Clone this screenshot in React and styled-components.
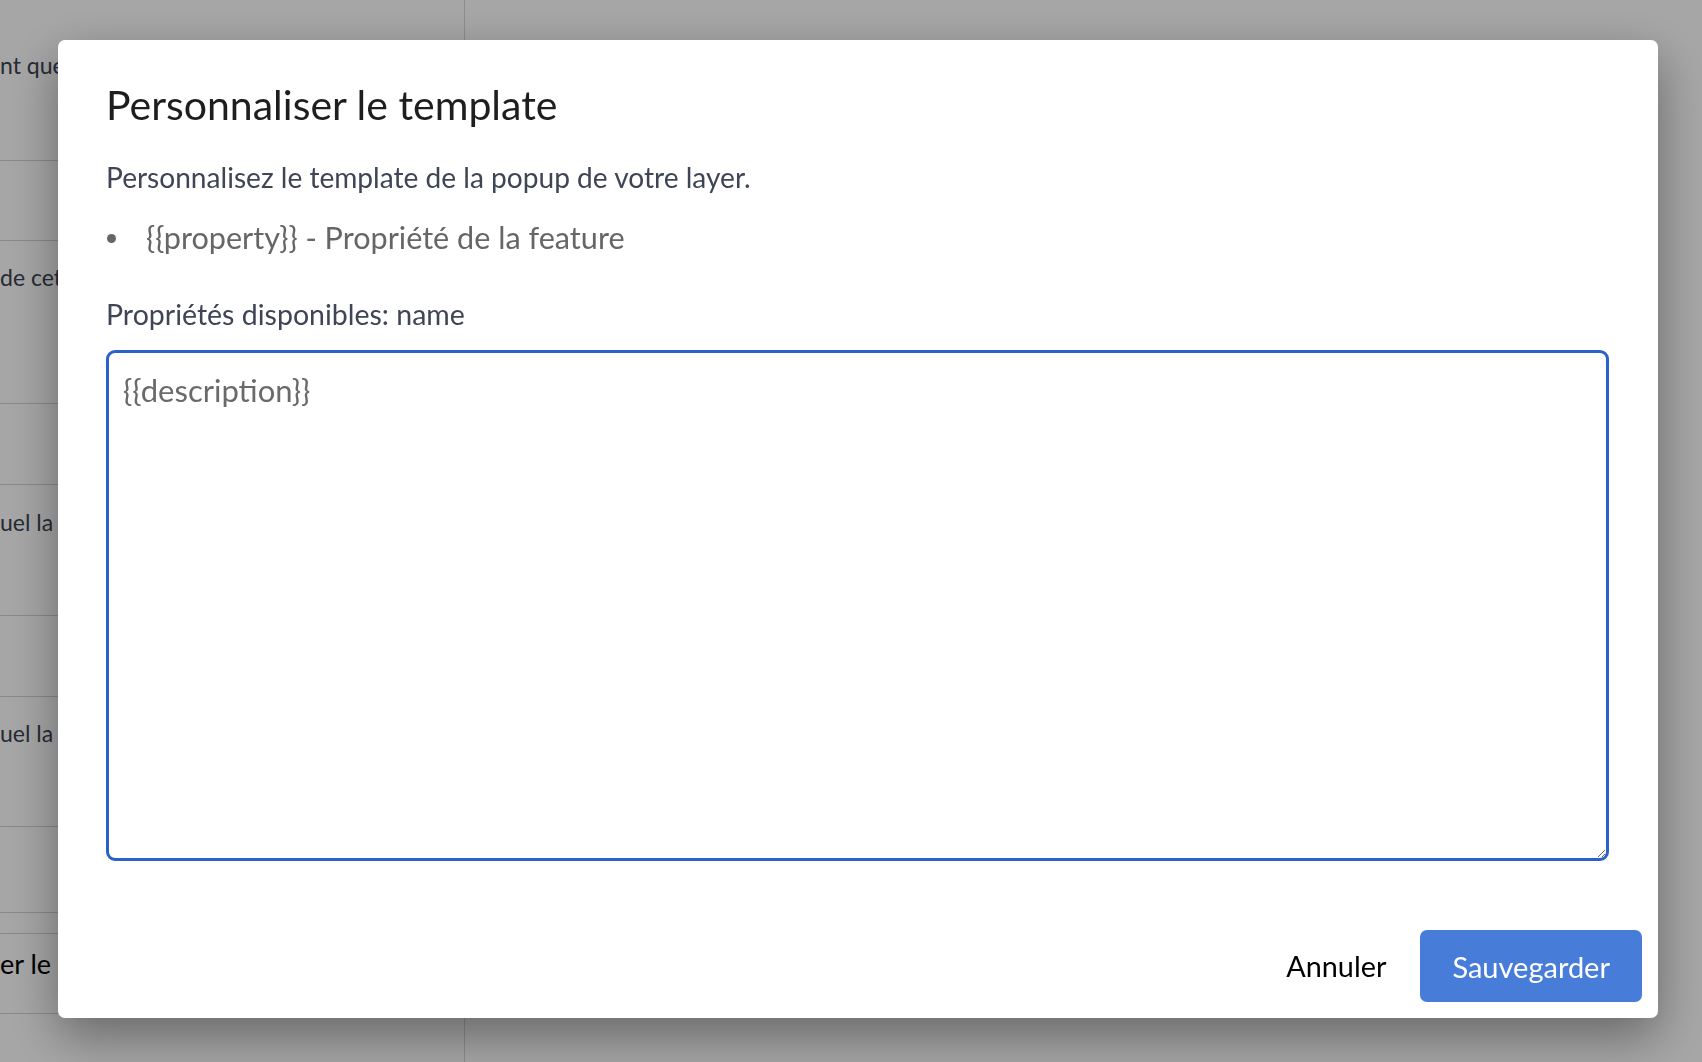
import React from 'react';
import styled, { createGlobalStyle } from 'styled-components';

const GlobalStyle = createGlobalStyle`
  html, body {
    margin: 0;
    padding: 0;
    height: 100%;
    overflow: hidden;
  }
  body {
    font-family: Lato, "Open Sans", "Liberation Sans", sans-serif;
    background: #ffffff;
  }
  * {
    box-sizing: border-box;
  }
`;

const Page = styled.div`
  display: flex;
  height: 100vh;
`;

const SideColumn = styled.div`
  width: 465px;
  flex-shrink: 0;
  border-right: 1px solid #d8d8d8;
  overflow: hidden;
  display: flex;
  flex-direction: column;
`;

const Row = styled.div`
  height: ${(p) => p.$h}px;
  flex-shrink: 0;
  border-bottom: 1px solid #d3d3d8;
  padding-top: ${(p) => p.$pad || 0}px;
  font-size: ${(p) => (p.$big ? 27 : 23)}px;
  line-height: 30px;
  color: ${(p) => (p.$big ? '#000' : '#3b4250')};
  white-space: nowrap;
`;

const Overlay = styled.div`
  position: fixed;
  inset: 0;
  background: rgba(0, 0, 0, 0.35);
  display: flex;
  align-items: flex-start;
  justify-content: flex-start;
  padding: 40px 0 0 58px;
`;

const Modal = styled.div`
  width: 1600px;
  height: 978px;
  background: #fff;
  border-radius: 7px;
  box-shadow: 0 18px 50px rgba(0, 0, 0, 0.38);
  display: flex;
  flex-direction: column;
`;

const Body = styled.div`
  padding: 41px 49px 0 48px;
  flex: 1;
`;

const Title = styled.h2`
  margin: 0;
  font-size: 41px;
  font-weight: 400;
  line-height: 48px;
  color: #1e1e1e;
`;

const Description = styled.p`
  margin: 27px 0 0;
  font-size: 28.1px;
  line-height: 42px;
  color: #3e4554;
`;

const HintList = styled.ul`
  margin: 19px 0 0;
  padding: 0;
  list-style: none;
`;

const Hint = styled.li`
  display: flex;
  align-items: center;
  font-size: 30.6px;
  line-height: 42px;
  color: #666;
`;

const Dot = styled.span`
  width: 40px;
  flex-shrink: 0;
  display: flex;
  align-items: center;
  &::after {
    content: '';
    display: block;
    margin-left: 1px;
    width: 9px;
    height: 9px;
    border-radius: 50%;
    background: #666;
  }
`;

const Label = styled.div`
  margin-top: 34px;
  font-size: 28.5px;
  line-height: 42px;
  color: #3e4554;
`;

const Editor = styled.textarea`
  display: block;
  width: 100%;
  height: 511px;
  margin-top: 15px;
  border: 3px solid #2a62c9;
  border-radius: 9px;
  padding: 16px 14px;
  font-family: Lato, "Open Sans", "Liberation Sans", sans-serif;
  font-size: 31px;
  line-height: 42px;
  color: #6a6a6a;
  outline: none;
  resize: vertical;
`;

const Footer = styled.div`
  display: flex;
  justify-content: flex-end;
  align-items: center;
  gap: 4px;
  padding: 0 16px 16px;
`;

const TextButton = styled.button`
  background: none;
  border: none;
  font-family: inherit;
  font-size: 28.8px;
  color: #000;
  padding: 0 30px;
  height: 72px;
  cursor: pointer;
`;

const PrimaryButton = styled.button`
  background: #477dd9;
  border: none;
  border-radius: 7px;
  font-family: inherit;
  font-size: 29px;
  color: #fff;
  height: 72px;
  padding: 0 32px;
  cursor: pointer;
`;

const rows = [
  { h: 161, pad: 50, text: 'nt que les données soient chargées' },
  { h: 80 },
  { h: 163, pad: 21, text: 'de cette couche' },
  { h: 81 },
  { h: 131, pad: 22, text: 'uel la couche est affichée' },
  { h: 81 },
  { h: 130, pad: 21, text: 'uel la couche est masquée' },
  { h: 86 },
  { h: 21 },
  { h: 80, pad: 15, text: 'er le template', big: true },
];

export default function App() {
  return (
    <>
      <GlobalStyle />
      <Page>
        <SideColumn>
          {rows.map((r, i) => (
            <Row key={i} $h={r.h} $pad={r.pad} $big={r.big}>
              {r.text}
            </Row>
          ))}
        </SideColumn>
      </Page>
      <Overlay>
        <Modal>
          <Body>
            <Title>Personnaliser le template</Title>
            <Description>Personnalisez le template de la popup de votre layer.</Description>
            <HintList>
              <Hint>
                <Dot />
                {'{{property}} - Propriété de la feature'}
              </Hint>
            </HintList>
            <Label>Propriétés disponibles: name</Label>
            <Editor defaultValue="{{description}}" spellCheck={false} />
          </Body>
          <Footer>
            <TextButton>Annuler</TextButton>
            <PrimaryButton>Sauvegarder</PrimaryButton>
          </Footer>
        </Modal>
      </Overlay>
    </>
  );
}
